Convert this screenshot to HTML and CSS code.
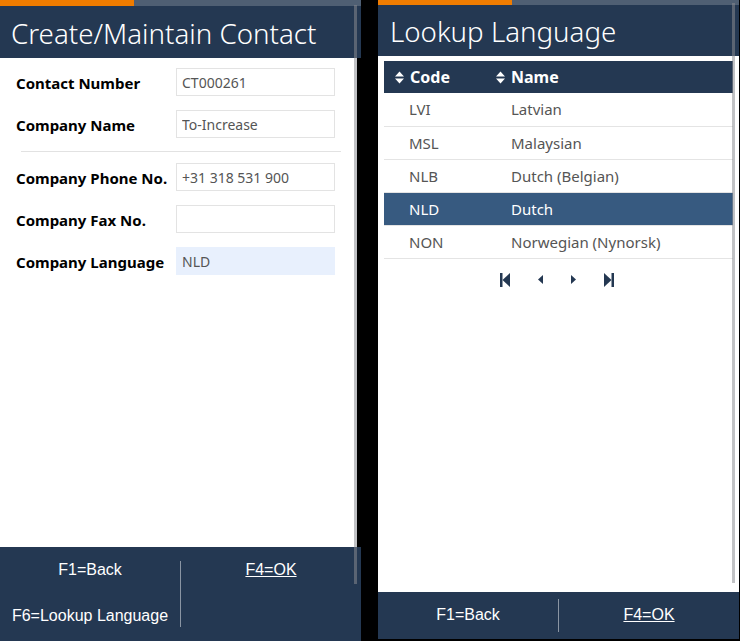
FILE: index.html
```html
<!DOCTYPE html>
<html lang="en">
<head>
<meta charset="utf-8">
<title>Contact</title>
<link rel="stylesheet" href="styles.css">
</head>
<body>
<div class="screen">
  <section class="panel panel-left">
    <div class="progress"><span class="progress-done"></span></div>
    <header class="title-bar"><h1>Create/Maintain Contact</h1></header>
    <main class="form-body">
      <div class="field field-first">
        <label class="field-label">Contact Number</label>
        <input class="field-input" type="text" value="CT000261" readonly>
      </div>
      <div class="field">
        <label class="field-label">Company Name</label>
        <input class="field-input" type="text" value="To-Increase" readonly>
      </div>
      <hr class="separator">
      <div class="field field-after-sep">
        <label class="field-label">Company Phone No.</label>
        <input class="field-input" type="text" value="+31 318 531 900" readonly>
      </div>
      <div class="field">
        <label class="field-label">Company Fax No.</label>
        <input class="field-input" type="text" value="" readonly>
      </div>
      <div class="field">
        <label class="field-label">Company Language</label>
        <input class="field-input field-input-focus" type="text" value="NLD" readonly>
      </div>
    </main>
    <footer class="fkeys fkeys-tall">
      <div class="fkey-col">
        <span class="fkey">F1=Back</span>
        <span class="fkey">F6=Lookup Language</span>
      </div>
      <div class="fkey-divider"></div>
      <div class="fkey-col">
        <span class="fkey fkey-default">F4=OK</span>
      </div>
    </footer>
    <div class="scroll-thumb scroll-thumb-left"></div>
  </section>

  <section class="panel panel-right">
    <div class="progress"><span class="progress-done"></span></div>
    <header class="title-bar title-bar-right"><h1>Lookup Language</h1></header>
    <main class="lookup-body">
      <table class="grid">
        <thead>
          <tr>
            <th class="col-code"><span class="th-inner"><svg class="sort-icon" width="9" height="13" viewBox="0 0 9 13"><path d="M0 5.5 L4.5 0.5 L9 5.5 Z M0 7.5 L9 7.5 L4.5 12.5 Z" fill="#fff"/></svg>Code</span></th>
            <th class="col-name"><span class="th-inner"><svg class="sort-icon" width="9" height="13" viewBox="0 0 9 13"><path d="M0 5.5 L4.5 0.5 L9 5.5 Z M0 7.5 L9 7.5 L4.5 12.5 Z" fill="#fff"/></svg>Name</span></th>
          </tr>
        </thead>
        <tbody>
          <tr><td>LVI</td><td>Latvian</td></tr>
          <tr><td>MSL</td><td>Malaysian</td></tr>
          <tr><td>NLB</td><td>Dutch (Belgian)</td></tr>
          <tr class="selected"><td>NLD</td><td>Dutch</td></tr>
          <tr><td>NON</td><td>Norwegian (Nynorsk)</td></tr>
        </tbody>
      </table>
      <nav class="pager">
        <svg width="10" height="14" viewBox="0 0 10 14"><rect x="0" y="0" width="2.5" height="14" fill="#243852"/><path d="M2.5 7 L10 0 L10 14 Z" fill="#243852"/></svg>
        <svg width="5" height="9" viewBox="0 0 5 9"><path d="M0 4.5 L5 0 L5 9 Z" fill="#243852"/></svg>
        <svg width="5" height="9" viewBox="0 0 5 9"><path d="M5 4.5 L0 0 L0 9 Z" fill="#243852"/></svg>
        <svg width="10" height="14" viewBox="0 0 10 14"><path d="M7.5 7 L0 0 L0 14 Z" fill="#243852"/><rect x="7.5" y="0" width="2.5" height="14" fill="#243852"/></svg>
      </nav>
    </main>
    <footer class="fkeys fkeys-short">
      <div class="fkey-col">
        <span class="fkey">F1=Back</span>
      </div>
      <div class="fkey-divider fkey-divider-short"></div>
      <div class="fkey-col">
        <span class="fkey fkey-default">F4=OK</span>
      </div>
    </footer>
    <div class="scroll-thumb scroll-thumb-right"></div>
  </section>
</div>
</body>
</html>
```

FILE: styles.css
```css
* { box-sizing: border-box; }

html, body {
  margin: 0;
  padding: 0;
  background: #000;
}

body {
  width: 740px;
  height: 641px;
  overflow: hidden;
  font-family: "Noto Sans", "Open Sans", sans-serif;
}

.screen {
  display: flex;
  gap: 17px;
  align-items: flex-start;
}

.panel {
  position: relative;
  width: 361px;
  display: flex;
  flex-direction: column;
  background: #000;
}

.panel-left { height: 641px; }
.panel-right { height: 639px; }

.progress {
  height: 6px;
  background: #4f5f73;
  display: flex;
}
.panel-right .progress { height: 5px; }

.progress-done {
  width: 134px;
  background: #f07c00;
}

.title-bar {
  background: #243852;
  height: 52px;
  padding: 2px 0 0 11px;
}
.title-bar-right {
  height: 51px;
  padding: 2px 0 0 12px;
}

.title-bar h1 {
  margin: 0;
  color: #fff;
  font-family: "Noto Sans", sans-serif;
  font-weight: 300;
  font-size: 27.7px;
  line-height: 50px;
  white-space: nowrap;
}
.title-bar-right h1 { line-height: 49px; }

/* ---------- form ---------- */
.form-body {
  flex: 1;
  background: #fff;
  margin-right: 4px;
  padding: 10px 0 0 16px;
  display: flex;
  flex-direction: column;
}

.field {
  display: flex;
  align-items: center;
  height: 28px;
  margin-top: 14px;
}
.field-first { margin-top: 0; }
.field-after-sep { margin-top: 11px; }

.field-label {
  width: 160px;
  font-weight: 700;
  font-size: 15px;
  color: #000;
  padding-top: 2px;
}

.field-input {
  width: 159px;
  height: 28px;
  border: 1px solid #e3e3e3;
  background: #fff;
  padding: 0 5px;
  font-family: "Noto Sans", sans-serif;
  font-size: 14px;
  color: #555;
  outline: none;
}

.field-input-focus {
  background: #e8f0fd;
  border-color: #e8f0fd;
}

.separator {
  margin: 13px 0 0 5px;
  width: 320px;
  border: 0;
  border-top: 1px solid #e2e2e2;
  height: 0;
}

/* ---------- lookup ---------- */
.lookup-body {
  flex: 1;
  background: #fff;
  padding: 5px 0 0 6px;
}

.grid {
  width: 349px;
  border-collapse: collapse;
  font-size: 15px;
}

.grid th {
  background: #243852;
  color: #fff;
  font-weight: 700;
  font-size: 16px;
  text-align: left;
  height: 32px;
  padding: 0 0 0 11px;
}

.col-code { width: 101px; }

.th-inner {
  display: flex;
  align-items: center;
  gap: 6px;
}

.sort-icon { flex: none; }

.grid td {
  height: 33px;
  padding: 0 0 0 25px;
  color: #555;
  border-bottom: 1px solid #e4e4e4;
}
.grid td + td { padding-left: 26px; }

.grid tr.selected td {
  background: #375a80;
  color: #fff;
}

.pager {
  display: flex;
  justify-content: center;
  align-items: center;
  gap: 28px;
  width: 349px;
  padding: 14px 3px 0 0;
}

/* ---------- function keys ---------- */
.fkeys {
  background: #243852;
  display: flex;
  font-family: "Liberation Sans", Arial, sans-serif;
  font-size: 16px;
  color: #fff;
}
.fkeys-tall { height: 94px; }
.fkeys-short { height: 47px; }

.fkey-col {
  flex: 1;
  display: flex;
  flex-direction: column;
}

.fkey {
  height: 46px;
  display: flex;
  align-items: center;
  justify-content: center;
}

.fkey-default { text-decoration: underline; }

.fkey-divider {
  width: 1px;
  background: #8a95a3;
  margin: 14px 0;
}
.fkey-divider-short { margin: 7px 0; }

/* ---------- overlay scrollbars ---------- */
.scroll-thumb {
  position: absolute;
  width: 3px;
  background: rgba(137, 140, 145, 0.53);
}
.scroll-thumb-left { left: 354px; top: 5px; height: 579px; }
.scroll-thumb-right { left: 354px; top: 3px; height: 580px; }
```
